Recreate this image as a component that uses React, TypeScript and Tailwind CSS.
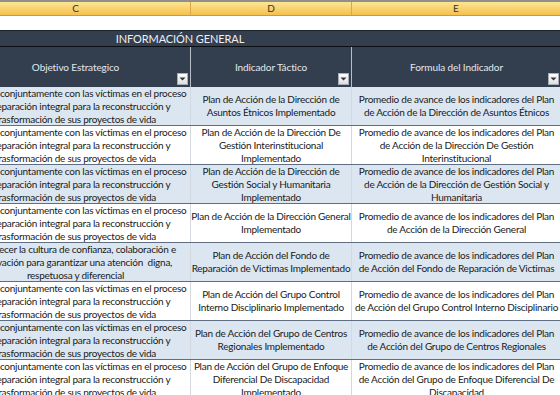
import React from "react";

const FONT = { fontFamily: "Lato, 'Open Sans', sans-serif" };

const C_STD = [
  "Avanzar conjuntamente con las víctimas en el proceso",
  "de reparación integral para la reconstrucción y",
  "trasformación de sus proyectos de vida",
];
const C_ALT = [
  "Fortalecer la cultura de confianza, colaboración e",
  "innovación para garantizar una atención  digna,",
  "respetuosa y diferencial",
];
const PROM = "Promedio de avance de los indicadores del Plan";

type Row = { c: string[]; d: string[]; e: string[] };

const rows: Row[] = [
  { c: C_STD, d: ["Plan de Acción de la Dirección de", "Asuntos Étnicos Implementado"], e: [PROM, "de Acción de la Dirección de Asuntos Étnicos"] },
  { c: C_STD, d: ["Plan de Acción de la Dirección De", "Gestión Interinstitucional", "Implementado"], e: [PROM, "de Acción de la Dirección De Gestión", "Interinstitucional"] },
  { c: C_STD, d: ["Plan de Acción de la Dirección de", "Gestión Social y Humanitaria", "Implementado"], e: [PROM, "de Acción de la Dirección de Gestión Social y", "Humanitaria"] },
  { c: C_STD, d: ["Plan de Acción de la Dirección General", "Implementado"], e: [PROM, "de Acción de la Dirección General"] },
  { c: C_ALT, d: ["Plan de Acción del Fondo de", "Reparación de Victimas Implementado"], e: [PROM, "de Acción del Fondo de Reparación de Victimas"] },
  { c: C_STD, d: ["Plan de Acción del Grupo Control", "Interno Disciplinario Implementado"], e: [PROM, "de Acción del Grupo Control Interno Disciplinario"] },
  { c: C_STD, d: ["Plan de Acción del Grupo de Centros", "Regionales Implementado"], e: [PROM, "de Acción del Grupo de Centros Regionales"] },
  { c: C_STD, d: ["Plan de Acción del Grupo de Enfoque", "Diferencial De Discapacidad", "Implementado"], e: [PROM, "de Acción del Grupo de Enfoque Diferencial De", "Discapacidad"] },
];

function Lines({ lines }: { lines: string[] }) {
  return (
    <div className="flex flex-col items-center justify-center h-full">
      {lines.map((l, i) => (
        <div key={i} className="whitespace-pre leading-[13px] text-center">
          {l}
        </div>
      ))}
    </div>
  );
}

function FilterBtn() {
  return (
    <div className="absolute right-[2px] bottom-[2px] w-[11px] h-[12px] bg-gradient-to-b from-[#ffffff] to-[#dcdfe3] border border-[#a8adb5] flex items-center justify-center">
      <svg width="7" height="4" viewBox="0 0 7 4">
        <path d="M0.5 0.5 L6.5 0.5 L3.5 3.5 Z" fill="#333" />
      </svg>
    </div>
  );
}

export default function App() {
  return (
    <div className="w-[560px] h-[395px] overflow-hidden bg-white text-[10px] tracking-[-0.25px] text-[#1a1a1a]" style={FONT}>
      <div className="h-[2px] bg-[#8f8f8f]" />
      {/* column letters */}
      <div className="flex h-[14px] bg-gradient-to-b from-[#fde592] to-[#f5c04c] border-b border-[#c99b3e] text-[10px] tracking-normal text-[#333]">
        <div className="ml-[-39px] w-[230px] shrink-0 flex items-center justify-center border-r border-[#d8a849]">C</div>
        <div className="w-[161px] shrink-0 flex items-center justify-center border-r border-[#d8a849]">D</div>
        <div className="w-[209px] shrink-0 flex items-center justify-center border-r border-[#d8a849]">E</div>
      </div>
      {/* blank row */}
      <div className="h-[14px] bg-white" />
      {/* title row */}
      <div className="h-[16px] bg-[#333f4f] border-t border-[#1c232d] flex">
        <div className="w-[360px] shrink-0 text-center text-[11px] tracking-[-0.1px] leading-[15px] text-[#eef0f3]">INFORMACIÓN GENERAL</div>
      </div>
      <div className="h-[1px] bg-[#0c0f14]" />
      {/* header row */}
      <div className="flex h-[40px] bg-[#333f4f] text-[#e4e7ec] tracking-[-0.1px]">
        <div className="ml-[-39px] w-[230px] shrink-0 relative flex items-center justify-center border-r border-[#b8bec8]">
          Objetivo Estrategico
          <FilterBtn />
        </div>
        <div className="w-[161px] shrink-0 relative flex items-center justify-center border-r border-[#b8bec8]">
          Indicador Táctico
          <FilterBtn />
        </div>
        <div className="w-[209px] shrink-0 relative flex items-center justify-center">
          Formula del Indicador
          <FilterBtn />
        </div>
      </div>
      {/* data rows */}
      {rows.map((r, i) => (
        <div
          key={i}
          className={
            "flex h-[39px] border-b border-[#5f6e83] " +
            (i % 2 === 0 ? "bg-[#dce6f1]" : "bg-white")
          }
        >
          <div className="ml-[-39px] w-[230px] shrink-0 overflow-hidden border-r border-[#d4d9e0]">
            <Lines lines={r.c} />
          </div>
          <div className="w-[161px] shrink-0 overflow-hidden border-r border-[#d4d9e0]">
            <Lines lines={r.d} />
          </div>
          <div className="w-[209px] shrink-0 overflow-hidden">
            <Lines lines={r.e} />
          </div>
        </div>
      ))}
    </div>
  );
}
